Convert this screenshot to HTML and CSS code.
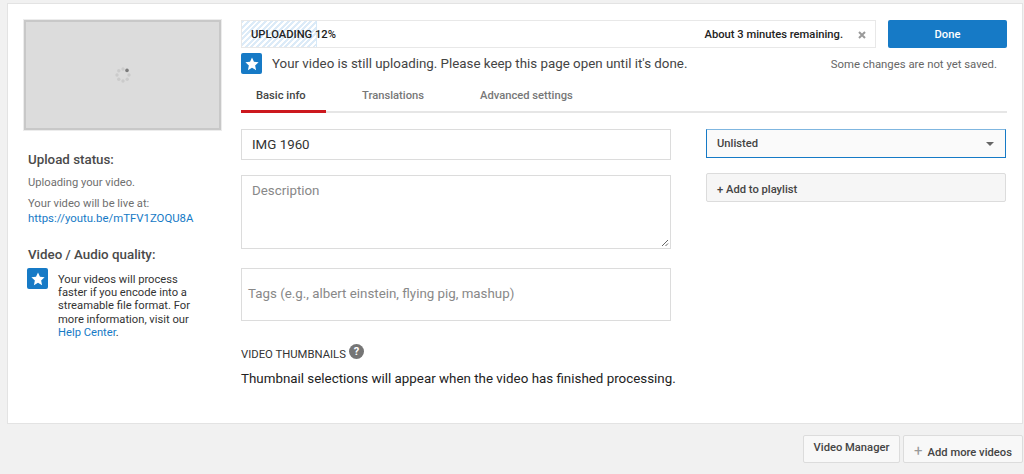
FILE: index.html
```html
<!DOCTYPE html>
<html lang="en">
<head>
<meta charset="utf-8">
<title>Upload</title>
<link rel="stylesheet" href="styles.css">
</head>
<body>
<main class="card">
  <aside class="side">
    <div class="thumb">
      <svg class="spinner" width="16" height="16" viewBox="0 0 16 16">
        <g fill="#cbcbcb">
          <circle cx="8" cy="2" r="1.7"/><circle cx="3.8" cy="3.8" r="1.7"/><circle cx="2" cy="8" r="1.7"/><circle cx="3.8" cy="12.2" r="1.7"/><circle cx="8" cy="14" r="1.7"/><circle cx="12.2" cy="12.2" r="1.7"/><circle cx="14" cy="8" r="1.7"/>
        </g>
        <circle cx="12" cy="3.4" r="1.8" fill="#7b7b7b"/>
      </svg>
    </div>
    <h3 class="side-title first">Upload status:</h3>
    <p class="muted">Uploading your video.</p>
    <p class="muted live">Your video will be live at:<br><a class="link" href="#">https://youtu.be/mTFV1ZOQU8A</a></p>
    <h3 class="side-title second">Video / Audio quality:</h3>
    <div class="tip">
      <span class="badge"><svg width="14" height="14" viewBox="0 0 24 24"><path fill="#fff" d="M12 1l3.4 7.3 7.9.9-5.9 5.4 1.6 7.9-7-4-7 4 1.6-7.9L.7 9.2l7.9-.9z"/></svg></span>
      <p>Your videos will process faster if you encode into a streamable file format. For more information, visit our <a href="#">Help Center</a>.</p>
    </div>
  </aside>
  <section class="content">
    <div class="top">
      <div class="progress">
        <div class="fill"></div>
        <span class="up-label">UPLOADING 12%</span>
        <span class="remain">About 3 minutes remaining.</span>
        <svg class="close" width="8" height="8" viewBox="0 0 8 8"><path d="M1 1l6 6M7 1L1 7" stroke="#9a9a9a" stroke-width="2"/></svg>
      </div>
      <button class="done">Done</button>
    </div>
    <div class="notice">
      <span class="badge"><svg width="14" height="14" viewBox="0 0 24 24"><path fill="#fff" d="M12 1l3.4 7.3 7.9.9-5.9 5.4 1.6 7.9-7-4-7 4 1.6-7.9L.7 9.2l7.9-.9z"/></svg></span>
      <span class="notice-text">Your video is still uploading. Please keep this page open until it's done.</span>
      <span class="saved">Some changes are not yet saved.</span>
    </div>
    <nav class="tabs">
      <span class="tab active">Basic info</span>
      <span class="tab t2">Translations</span>
      <span class="tab t3">Advanced settings</span>
    </nav>
    <div class="form">
      <div class="fields">
        <div class="field title">IMG 1960</div>
        <div class="field desc">Description
          <svg class="grip" width="8" height="8" viewBox="0 0 8 8"><path d="M1 7l6-6M4.5 7L7 4.5" stroke="#666" stroke-width="1"/></svg>
        </div>
        <div class="field tags">Tags (e.g., albert einstein, flying pig, mashup)</div>
        <div class="thumbs-head">VIDEO THUMBNAILS <span class="help">?</span></div>
        <p class="thumbs-note">Thumbnail selections will appear when the video has finished processing.</p>
      </div>
      <div class="options">
        <div class="select">Unlisted<span class="caret"></span></div>
        <div class="playlist">+ Add to playlist</div>
      </div>
    </div>
  </section>
</main>
<footer class="actions">
  <button class="act manager">Video Manager</button>
  <button class="act more"><span class="plus">+</span>Add more videos</button>
</footer>
</body>
</html>
```
FILE: styles.css
```css
* { box-sizing: border-box; }
html, body { margin: 0; height: 474px; overflow: hidden; }
body { background: #f1f1f1; font-family: Roboto, "Liberation Sans", sans-serif; color: #333; font-size: 11.2px; }
p, h3 { margin: 0; }
a { color: #167ac6; text-decoration: none; }
.link { font-size: 11.4px; }
.card { margin: 3px 1px 0 7px; height: 421px; background: #fff; border: 1px solid #e3e3e3; display: flex; padding: 16px 16px 0 16px; }
.side { width: 197px; flex: none; }
.thumb { width: 197px; height: 110px; background: #dcdcdc; border: 2px solid #c8c8c8; outline: 1px solid #ececec; display: flex; align-items: center; justify-content: center; }
.side-title { font-size: 13.33px; font-weight: 500; color: #4a4a4a; line-height: 16px; padding-left: 4px; }
.side-title.first { margin-top: 22px; }
.side-title.second { margin-top: 21px; }
.muted { color: #6f6f6f; line-height: 15px; padding-left: 4px; }
.side-title + .muted { margin-top: 7px; }
.live { margin-top: 6px; }
.tip { display: flex; margin: 5px 0 0 3px; }
.tip p { margin: 5px 0 0 10px; width: 134px; line-height: 13.2px; color: #333; }
.badge { width: 21px; height: 21px; flex: none; background: #167ac6; border-radius: 2px; display: flex; align-items: center; justify-content: center; }
.content { width: 766px; margin-left: 20px; flex: none; }
.top { display: flex; justify-content: space-between; }
.progress { position: relative; width: 635px; height: 28px; border: 1px solid #e8e8e8; display: flex; align-items: center; justify-content: space-between; padding: 0 32px 0 9px; font-weight: 500; color: #222; }
.fill { position: absolute; left: 0; top: 0; bottom: 0; width: 75px; border-right: 1px solid #d6e9f8; background: repeating-linear-gradient(135deg, #dcebf8 0 2px, #fff 2px 4px); }
.up-label, .remain { position: relative; }
.close { position: absolute; right: 9px; top: 10px; }
.done { width: 119px; height: 28px; border: 0; border-radius: 2px; background: #167ac6; color: #fff; font: 500 11.2px Roboto, sans-serif; padding: 1px 0 0; }
.notice { display: flex; align-items: center; margin-top: 5px; height: 21px; }
.notice-text { margin-left: 10px; font-size: 13.33px; color: #444; }
.saved { margin-left: auto; margin-right: 10px; font-size: 11.35px; color: #666; }
.tabs { display: flex; height: 31px; margin-top: 8px; border-bottom: 2px solid #e6e6e6; align-items: flex-start; font-weight: 500; color: #777; }
.tab { line-height: 27px; }
.tab.active { width: 85px; height: 31px; padding-left: 15px; color: #444; border-bottom: 3px solid #cc181e; }
.t2 { margin-left: 36px; }
.t3 { margin-left: 56px; }
.form { display: flex; justify-content: space-between; margin-top: 16px; }
.fields { width: 430px; }
.field { border: 1px solid #dcdcdc; font-size: 13.33px; color: #888; padding-left: 10px; position: relative; }
.title { height: 31px; line-height: 29px; color: #333; }
.desc { height: 74px; margin-top: 15px; padding-top: 6px; line-height: 17px; }
.grip { position: absolute; right: 1px; bottom: 1px; }
.tags { height: 53px; margin-top: 19px; line-height: 49px; padding-left: 6px; }
.thumbs-head { margin-top: 26px; font-size: 11.3px; color: #333; display: flex; align-items: center; line-height: 16px; }
.help { margin-left: 3px; margin-top: -8px; width: 15px; height: 15px; border-radius: 50%; background: #757575; color: #fff; font-size: 11px; font-weight: 700; line-height: 15px; text-align: center; }
.thumbs-note { margin-top: 8px; font-size: 13.36px; color: #222; line-height: 16px; white-space: nowrap; }
.options { width: 300px; margin-right: 1px; }
.select { position: relative; height: 29px; border: 1px solid #167ac6; border-top-color: #7fb6e0; background: #fafafa; padding-left: 10px; line-height: 27px; font-weight: 500; color: #444; }
.caret { position: absolute; right: 11px; top: 12px; border: 4px solid transparent; border-top: 4px solid #666; }
.playlist { height: 29px; margin-top: 15px; border: 1px solid #dcdcdc; border-radius: 2px; background: #f6f6f6; padding-left: 10px; line-height: 31px; font-weight: 500; color: #444; }
.actions { display: flex; justify-content: flex-end; gap: 3px; margin: 11px 1px 0 0; }
.act { height: 28px; border: 1px solid #dcdcdc; border-radius: 2px; background: #f8f8f8; color: #444; font: 500 11.2px Roboto, sans-serif; padding: 0; }
.manager { width: 97px; padding-bottom: 3px; }
.more { width: 120px; padding-top: 3px; }
.plus { color: #999; font-size: 15px; margin-right: 5px; font-weight: 400; }
```
